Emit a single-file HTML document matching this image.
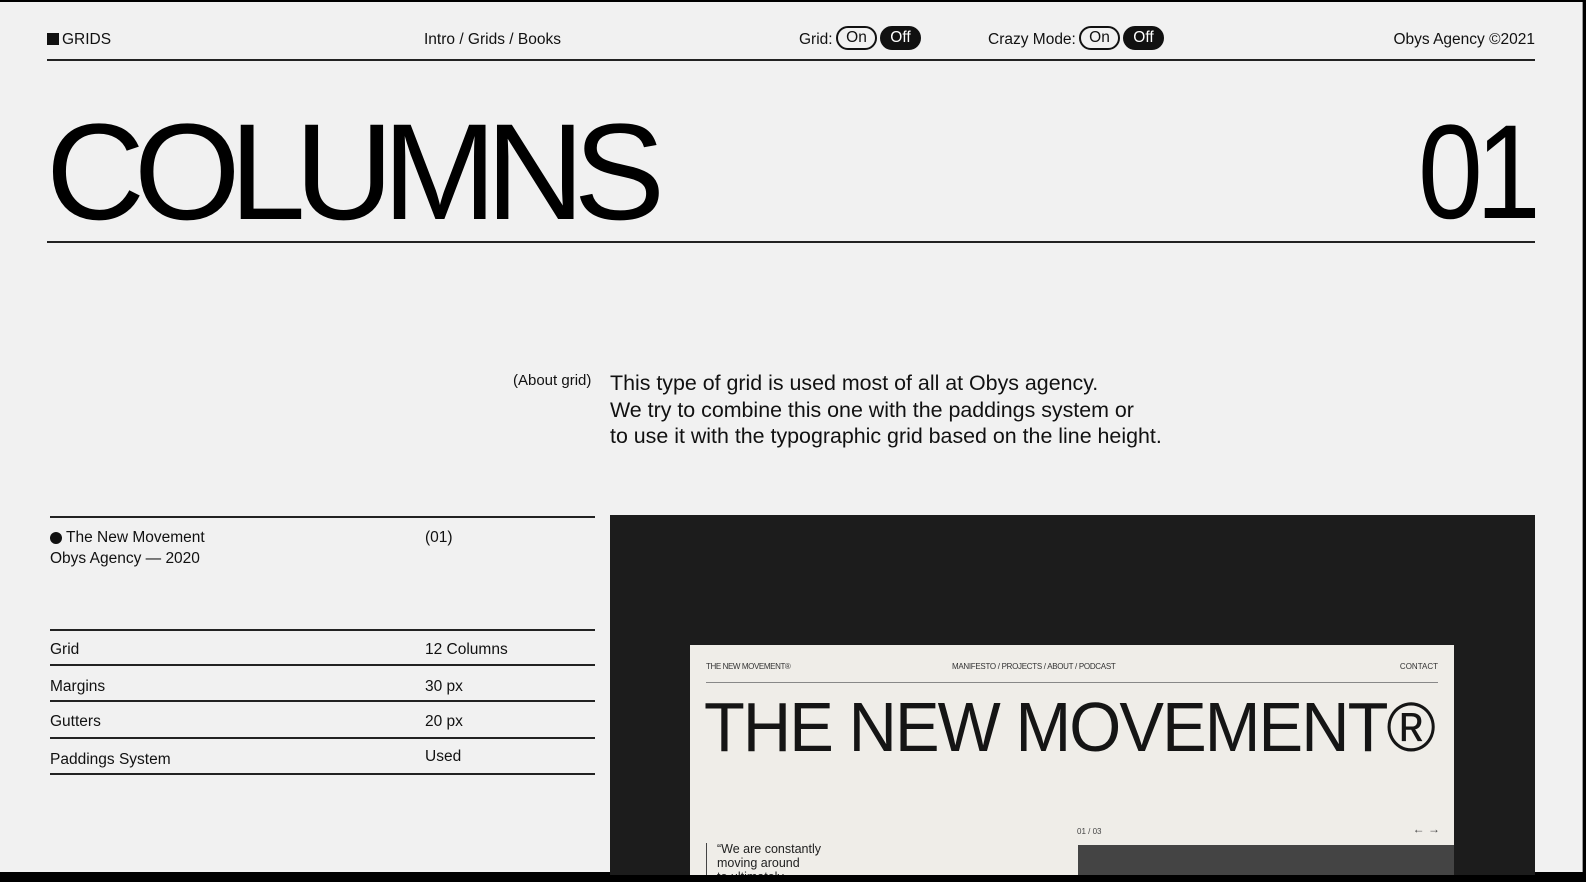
<!DOCTYPE html>
<html><head><meta charset="utf-8"><style>
*{margin:0;padding:0;box-sizing:border-box}
html,body{width:1586px;height:882px;overflow:hidden;background:#000}
body{font-family:"Liberation Sans",Arial,sans-serif;color:#111;position:relative}
.page{position:absolute;left:0;top:2px;width:1583px;height:870px;background:#f1f1f1;border-right:1px solid #999}
.a{position:absolute;white-space:nowrap}
.t16{font-size:15.5px;line-height:16px}
.pill{position:absolute;height:24px;border:2px solid #111;border-radius:12px;font-size:15.5px;line-height:20px;text-align:center}
.hr{position:absolute;height:2px;background:#222}
</style></head><body>
<div class="page">
<div class="a" style="left:47px;top:31px;width:12px;height:12px;background:#111"></div>
<div class="a t16" style="left:62px;top:30px">GRIDS</div>
<div class="a t16" style="left:424px;top:30px">Intro / Grids / Books</div>
<div class="a t16" style="left:799px;top:30px">Grid:</div>
<div class="pill" style="left:836px;top:24px;width:41px">On</div>
<div class="pill" style="left:880px;top:24px;width:41px;background:#111;color:#fff">Off</div>
<div class="a t16" style="left:988px;top:30px">Crazy Mode:</div>
<div class="pill" style="left:1079px;top:24px;width:41px">On</div>
<div class="pill" style="left:1123px;top:24px;width:41px;background:#111;color:#fff">Off</div>
<div class="a t16" style="right:47px;top:30px">Obys Agency ©2021</div>
<div class="hr" style="left:47px;top:57px;width:1488px"></div>

<div class="a" style="left:46px;top:96px;font-size:137px;line-height:150px;letter-spacing:-11px;color:#000">COLUMNS</div>
<div class="a" style="left:1418px;top:96px;font-size:134px;line-height:150px;letter-spacing:-8px;color:#000;transform:scaleX(0.87);transform-origin:left top">01</div>
<div class="hr" style="left:47px;top:239px;width:1488px;height:1.5px"></div>

<div class="a" style="left:513px;top:370px;font-size:15px">(About grid)</div>
<div class="a" style="left:610px;top:368px;font-size:21.4px;line-height:26.5px">This type of grid is used most of all at Obys agency.<br>We try to combine this one with the paddings system or<br>to use it with the typographic grid based on the line height.</div>

<div class="hr" style="left:50px;top:514px;width:545px"></div>
<div class="a" style="left:50px;top:530px;width:12px;height:12px;border-radius:50%;background:#111"></div>
<div class="a t16" style="left:66px;top:528px">The New Movement</div>
<div class="a t16" style="left:50px;top:549px">Obys Agency — 2020</div>
<div class="a t16" style="left:425px;top:528px">(01)</div>
<div class="hr" style="left:50px;top:627px;width:545px"></div>
<div class="a t16" style="left:50px;top:640px">Grid</div><div class="a t16" style="left:425px;top:640px">12 Columns</div>
<div class="hr" style="left:50px;top:662px;width:545px"></div>
<div class="a t16" style="left:50px;top:677px">Margins</div><div class="a t16" style="left:425px;top:677px">30 px</div>
<div class="hr" style="left:50px;top:698px;width:545px"></div>
<div class="a t16" style="left:50px;top:712px">Gutters</div><div class="a t16" style="left:425px;top:712px">20 px</div>
<div class="hr" style="left:50px;top:735px;width:545px"></div>
<div class="a t16" style="left:50px;top:750px">Paddings System</div><div class="a t16" style="left:425px;top:747px">Used</div>
<div class="hr" style="left:50px;top:771px;width:545px"></div>

<div class="a" style="left:610px;top:513px;width:925px;height:360px;background:#1c1c1c">
 <div class="a" style="left:80px;top:130px;width:764px;height:230px;background:#efede8;overflow:hidden">
  <div class="a" style="left:16px;top:17px;font-size:8px;letter-spacing:-0.4px;color:#333">THE NEW MOVEMENT®</div>
  <div class="a" style="left:262px;top:17px;font-size:8px;letter-spacing:-0.3px;color:#333">MANIFESTO / PROJECTS / ABOUT / PODCAST</div>
  <div class="a" style="right:16px;top:17px;font-size:8px;color:#333">CONTACT</div>
  <div class="a" style="left:16px;top:37px;width:732px;height:1px;background:#888"></div>
  <div class="a" style="left:14px;top:47px;font-size:70px;line-height:70px;letter-spacing:-2px;color:#151515;transform:scaleX(0.955);transform-origin:left top">THE NEW MOVEMENT®</div>
  <div class="a" style="left:387px;top:182px;font-size:8px;color:#444">01 / 03</div>
  <div class="a" style="right:14px;top:177px;font-size:12px;color:#444">← →</div>
  <div class="a" style="left:16px;top:198px;width:1px;height:40px;background:#444"></div>
  <div class="a" style="left:27px;top:197px;font-size:12.5px;line-height:14px;color:#222">“We are constantly<br>moving around<br>to ultimately</div>
  <div class="a" style="left:388px;top:200px;width:376px;height:40px;background:#444"></div>
 </div>
</div>
</div>
</body></html>
